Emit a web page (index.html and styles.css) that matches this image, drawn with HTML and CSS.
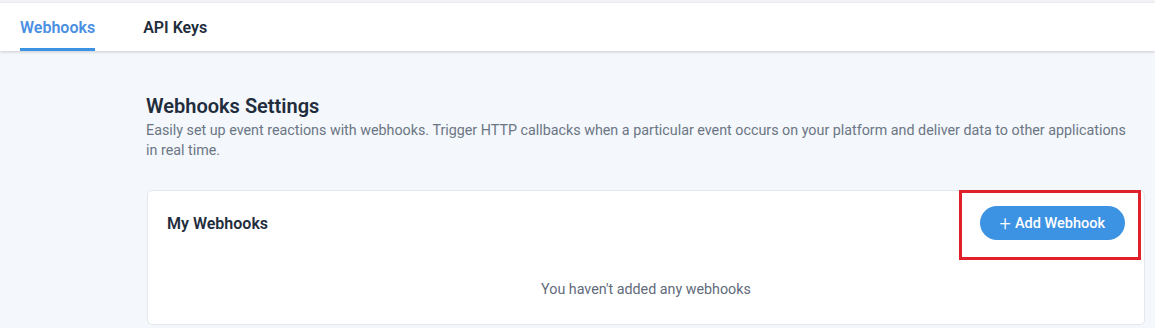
FILE: index.html
```html
<!DOCTYPE html>
<html lang="en">
<head>
    <meta charset="UTF-8">
    <meta name="viewport" content="width=device-width, initial-scale=1.0">
    <title>Integrations</title>
    <link rel="stylesheet" href="styles.css">
</head>
<body>
    <div class="top-strip"></div>
    <header class="tabs">
        <a class="tab active" href="#">Webhooks</a>
        <a class="tab" href="#">API Keys</a>
    </header>

    <main class="content">
        <h1>Webhooks Settings</h1>
        <p class="description">Easily set up event reactions with webhooks. Trigger HTTP callbacks when a particular event occurs on your platform and deliver data to other applications in real time.</p>

        <section class="card">
            <div class="card-header">
                <h2>My Webhooks</h2>
                <div class="highlight">
                    <button class="add-button"><span class="plus">+</span> Add Webhook</button>
                </div>
            </div>
            <div class="empty">You haven't added any webhooks</div>
        </section>
    </main>
</body>
</html>
```

FILE: styles.css
```css
body {
    margin: 0;
    font-family: Roboto, "Noto Sans", sans-serif;
    background-color: #f4f7fb;
    color: #1f2d3d;
    overflow: hidden;
}
.top-strip {
    height: 3px;
    background-color: #f1f3f6;
}
.tabs {
    display: flex;
    gap: 48px;
    height: 48px;
    padding-left: 20px;
    background-color: #ffffff;
    box-shadow: 0 1px 3px rgba(0, 0, 0, 0.18);
}
.tab {
    display: flex;
    align-items: center;
    box-sizing: border-box;
    border-bottom: 3px solid transparent;
    padding-top: 3px;
    font-size: 16px;
    font-weight: 600;
    color: #1f2d3d;
    text-decoration: none;
}
.tab.active {
    color: #4a90e2;
    border-bottom-color: #3d93e3;
}
.content {
    padding: 41px 10px 0 146px;
}
h1 {
    margin: 0;
    font-size: 20px;
    line-height: 28px;
    font-weight: 600;
    color: #1f2d3d;
}
.description {
    max-width: 990px;
    margin: 0;
    font-size: 14.3px;
    line-height: 20px;
    color: #6b7685;
}
.card {
    margin-top: 30px;
    margin-left: 1px;
    height: 135px;
    box-sizing: border-box;
    background-color: #ffffff;
    border: 1px solid #e4e8ee;
    border-radius: 5px;
}
.card-header {
    display: flex;
    align-items: center;
    justify-content: space-between;
    padding: 15px 19px 0 19px;
}
h2 {
    margin: 0;
    font-size: 16px;
    font-weight: 600;
    color: #1f2d3d;
}
.highlight {
    position: relative;
}
.highlight::after {
    content: "";
    position: absolute;
    top: -16px;
    left: -21px;
    right: -16px;
    bottom: -20px;
    border: 3px solid #e0202b;
}
.add-button {
    display: flex;
    align-items: center;
    gap: 4px;
    height: 34px;
    padding: 0 20px;
    border: none;
    border-radius: 17px;
    background-color: #3d93e3;
    color: #ffffff;
    font-family: inherit;
    font-size: 14.5px;
    font-weight: 500;
}
.plus {
    font-size: 20px;
    font-weight: 300;
}
.empty {
    margin-top: 41px;
    text-align: center;
    font-size: 14.3px;
    color: #5f6b7a;
}
```
